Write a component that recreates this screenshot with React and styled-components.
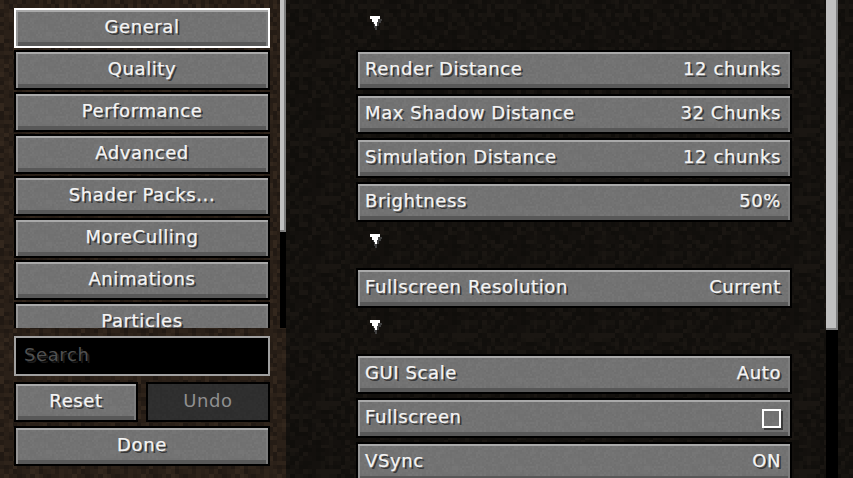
import React from "react";
import styled, { createGlobalStyle, css } from "styled-components";

// pixel noise tile, same idea as the game's repeating dirt / stone textures
const noiseTile = (colors, cells, cellSize, seed) => {
  let s = seed;
  const next = () => {
    s = (s * 9301 + 49297) % 233280;
    return s / 233280;
  };
  let rects = "";
  for (let y = 0; y < cells; y++) {
    for (let x = 0; x < cells; x++) {
      const c = colors[Math.floor(next() * colors.length)];
      rects += `<rect x='${x}' y='${y}' width='1.02' height='1.02' fill='${c}'/>`;
    }
  }
  const size = cells * cellSize;
  const svg = `<svg xmlns='http://www.w3.org/2000/svg' width='${size}' height='${size}' viewBox='0 0 ${cells} ${cells}' shape-rendering='crispEdges'>${rects}</svg>`;
  return `url("data:image/svg+xml,${encodeURIComponent(svg)}")`;
};

const dirtLight = noiseTile(["#2a2018", "#251c15", "#2e231a", "#211913", "#33271d", "#281e16"], 16, 4.27, 7);
const dirtDark = noiseTile(["#14110e", "#110f0c", "#171410", "#13100d", "#1a1612", "#100e0b"], 16, 4.27, 31);
const stone = noiseTile(["#737373", "#727272", "#747474", "#717171", "#767676", "#707070"], 32, 2, 11);
const stoneDark = noiseTile(["#2f2f2f", "#2e2e2e", "#303030", "#2d2d2d"], 32, 2, 19);

const GlobalStyle = createGlobalStyle`
  html, body, #root {
    margin: 0;
    padding: 0;
    width: 100%;
    height: 100%;
    overflow: hidden;
    background: #14110d;
  }
`;

const mcText = css`
  font-family: "DejaVu Sans", sans-serif;
  font-size: 18px;
  line-height: 20px;
  letter-spacing: 0.6px;
  color: #f4f4f4;
  text-shadow: 2px 2px 0 #383838;
  -webkit-text-stroke: 0.25px #f4f4f4;
`;

const Page = styled.div`
  display: flex;
  width: 853px;
  height: 478px;
  overflow: hidden;
`;

const Sidebar = styled.div`
  display: flex;
  flex-direction: column;
  flex: none;
  width: 286px;
  height: 478px;
  background-image: ${dirtLight};
`;

const CategoryArea = styled.div`
  display: flex;
  flex: none;
  height: 328px;
`;

const CategoryList = styled.div`
  display: flex;
  flex-direction: column;
  flex: none;
  gap: 2px;
  width: 256px;
  margin: 0 10px 0 14px;
  padding-top: 8px;
  overflow: hidden;
`;

const Button = styled.button`
  ${mcText}
  display: flex;
  flex: none;
  align-items: center;
  justify-content: ${(p) => (p.$row ? "space-between" : "center")};
  box-sizing: border-box;
  width: 100%;
  height: 40px;
  margin: 0;
  padding: ${(p) => (p.$row ? "0 9px 3px 7px" : "0 0 3px")};
  border: 2px solid ${(p) => (p.$focused ? "#ffffff" : "#000000")};
  border-radius: 0;
  background-image: ${(p) => (p.$disabled ? stoneDark : stone)};
  box-shadow: ${(p) =>
    p.$disabled
      ? "none"
      : "inset 0 2px 0 #a9a9a9, inset 2px 0 0 #959595, inset -2px 0 0 #7c7c7c, inset 0 -4px 0 #585858"};
  ${(p) =>
    p.$disabled &&
    css`
      color: #8f8f8f;
      text-shadow: none;
      -webkit-text-stroke: 0;
    `}
`;

const Scrollbar = styled.div`
  flex: none;
  width: ${(p) => p.$width}px;
  height: 100%;
  background: #000000;
`;

const Thumb = styled.div`
  box-sizing: border-box;
  width: 100%;
  height: ${(p) => p.$height}px;
  background: #c0c0c0;
  border-right: 2px solid #808080;
  border-bottom: 2px solid #808080;
`;

const Footer = styled.div`
  display: flex;
  flex-direction: column;
  gap: 4px;
  width: 256px;
  margin: 8px 0 0 14px;
`;

const SearchInput = styled.input`
  ${mcText}
  box-sizing: border-box;
  width: 100%;
  height: 40px;
  margin-bottom: 2px;
  padding: 0 8px 3px;
  border: 2px solid #a0a0a0;
  border-radius: 0;
  outline: none;
  background: #000000;
  text-shadow: 2px 2px 0 #1c1c1c;
  -webkit-text-stroke: 0;

  &::placeholder {
    color: #505050;
    opacity: 1;
  }
`;

const ButtonPair = styled.div`
  display: grid;
  grid-template-columns: 124px 124px;
  gap: 8px;
`;

const OptionsPane = styled.div`
  display: flex;
  flex: 1;
  height: 478px;
  background-image: ${dirtDark};
`;

const OptionsList = styled.div`
  display: flex;
  flex-direction: column;
  flex: none;
  gap: 4px;
  width: 436px;
  height: 478px;
  margin: 0 34px 0 70px;
  padding-top: 8px;
  box-sizing: border-box;
  overflow: hidden;
`;

const GroupHeader = styled.div`
  display: flex;
  flex: none;
  height: 38px;
  padding: 8px 0 0 14px;
  box-sizing: border-box;
`;

const Checkbox = styled.span`
  display: block;
  box-sizing: border-box;
  width: 19px;
  height: 19px;
  margin: 3px 0 0;
  border: 2px solid #ffffff;
  box-shadow: 2px 2px 0 #3a3a3a;
`;

const GroupArrow = () => (
  <svg width="12" height="14" viewBox="0 0 12 14" shapeRendering="crispEdges">
    <path d="M3 3H12V5H11V7H9V10H7V14H5V12H4V8H3Z" fill="#3f3f3f" />
    <path d="M0 0H10V3H8V6H7V10H5V8H4V6H2V3H0Z" fill="#ffffff" />
  </svg>
);

const categories = ["Quality", "Performance", "Advanced", "Shader Packs...", "MoreCulling", "Animations", "Particles"];

const groups = [
  [
    ["Render Distance", "12 chunks"],
    ["Max Shadow Distance", "32 Chunks"],
    ["Simulation Distance", "12 chunks"],
    ["Brightness", "50%"],
  ],
  [["Fullscreen Resolution", "Current"]],
  [
    ["GUI Scale", "Auto"],
    ["Fullscreen", null],
    ["VSync", "ON"],
  ],
];

export default function App() {
  return (
    <>
      <GlobalStyle />
      <Page>
        <Sidebar>
          <CategoryArea>
            <CategoryList>
              <Button $focused>General</Button>
              {categories.map((name) => (
                <Button key={name}>{name}</Button>
              ))}
            </CategoryList>
            <Scrollbar $width={6}>
              <Thumb $height={232} />
            </Scrollbar>
          </CategoryArea>
          <Footer>
            <SearchInput placeholder="Search" />
            <ButtonPair>
              <Button>Reset</Button>
              <Button $disabled>Undo</Button>
            </ButtonPair>
            <Button>Done</Button>
          </Footer>
        </Sidebar>
        <OptionsPane>
          <OptionsList>
            {groups.map((rows, i) => (
              <React.Fragment key={i}>
                <GroupHeader>
                  <GroupArrow />
                </GroupHeader>
                {rows.map(([label, value]) => (
                  <Button $row key={label}>
                    <span>{label}</span>
                    {value ? <span>{value}</span> : <Checkbox />}
                  </Button>
                ))}
              </React.Fragment>
            ))}
          </OptionsList>
          <Scrollbar $width={12}>
            <Thumb $height={330} />
          </Scrollbar>
        </OptionsPane>
      </Page>
    </>
  );
}
